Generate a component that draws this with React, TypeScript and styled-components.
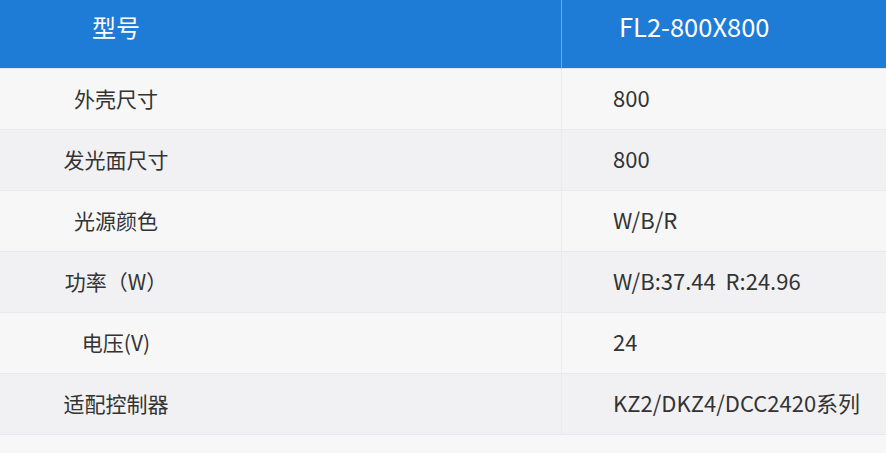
import React from 'react';
import styled, { createGlobalStyle } from 'styled-components';

const specs = [
  { label: '外壳尺寸', value: '800' },
  { label: '发光面尺寸', value: '800' },
  { label: '光源颜色', value: 'W/B/R' },
  { label: '功率（W）', value: 'W/B:37.44\u00a0\u00a0R:24.96' },
  { label: '电压(V)', value: '24' },
  { label: '适配控制器', value: 'KZ2/DKZ4/DCC2420系列' },
];

const GlobalStyle = createGlobalStyle`
  html, body {
    margin: 0;
    padding: 0;
    background: #f7f7f7;
  }
  body {
    font-family: "Noto Sans CJK SC", "Noto Sans", sans-serif;
    color: #333;
  }
`;

const Table = styled.div`
  width: 886px;
  display: grid;
  grid-template-columns: 562px 1fr;
`;

const HeadCell = styled.div<{ $first?: boolean }>`
  height: 69px;
  display: flex;
  align-items: center;
  background: #1e7bd6;
  color: #fff;
  border-bottom: 1px solid #d9e6f3;
  border-right: ${(p) => (p.$first ? '1px solid #6aa8e6' : 'none')};
  padding-bottom: 16px;
  box-sizing: border-box;
`;

const Cell = styled.div<{ $even: boolean; $first?: boolean }>`
  height: 61px;
  display: flex;
  align-items: center;
  padding-bottom: 2px;
  background: ${(p) => (p.$even ? '#f1f1f3' : '#f7f7f7')};
  border-bottom: 1px solid #e9e9eb;
  border-right: ${(p) => (p.$first ? '1px solid #ebebed' : 'none')};
  box-sizing: border-box;
`;

const Label = styled.span<{ $head?: boolean }>`
  width: 232px;
  text-align: center;
  font-size: ${(p) => (p.$head ? '24px' : '21px')};
`;

const Value = styled.span<{ $head?: boolean }>`
  padding-left: ${(p) => (p.$head ? '57px' : '51px')};
  font-size: ${(p) => (p.$head ? '25.5px' : '22px')};
  margin-bottom: ${(p) => (p.$head ? '2px' : '2px')};
`;

export default function App() {
  return (
    <>
      <GlobalStyle />
      <Table>
        <HeadCell $first>
          <Label $head>型号</Label>
        </HeadCell>
        <HeadCell>
          <Value $head>FL2-800X800</Value>
        </HeadCell>
        {specs.map((s, i) => (
          <React.Fragment key={s.label}>
            <Cell $even={i % 2 === 1} $first>
              <Label>{s.label}</Label>
            </Cell>
            <Cell $even={i % 2 === 1}>
              <Value>{s.value}</Value>
            </Cell>
          </React.Fragment>
        ))}
      </Table>
    </>
  );
}
